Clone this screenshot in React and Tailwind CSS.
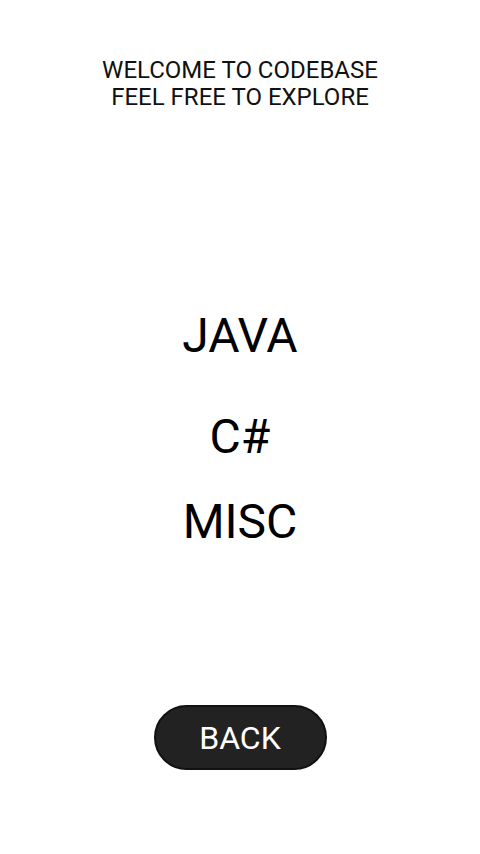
import * as React from "react";

const App = () => {
  const langs = ["JAVA", "C#", "MISC"];
  return (
    <div
      className="w-[480px] h-[854px] bg-white flex flex-col items-center text-black"
      style={{ fontFamily: "Roboto, 'Liberation Sans', sans-serif" }}
    >
      {/* header */}
      <div className="mt-[57px] text-center text-[24px] leading-[27px] text-[#111111]">
        <p>WELCOME TO CODEBASE</p>
        <p>FEEL FREE TO EXPLORE</p>
      </div>

      {/* languages */}
      <div className="mt-[197px] flex flex-col items-center text-[48px] leading-[56px]">
        <button className="">{langs[0]}</button>
        <button className="mt-[45px]">{langs[1]}</button>
        <button className="mt-[29px]">{langs[2]}</button>
      </div>

      {/* back */}
      <button className="mt-[155px] w-[173px] h-[65px] rounded-full bg-[#222222] border-2 border-[#111111] text-white text-[32px] flex items-center justify-center">
        BACK
      </button>
    </div>
  );
};

export default App;
